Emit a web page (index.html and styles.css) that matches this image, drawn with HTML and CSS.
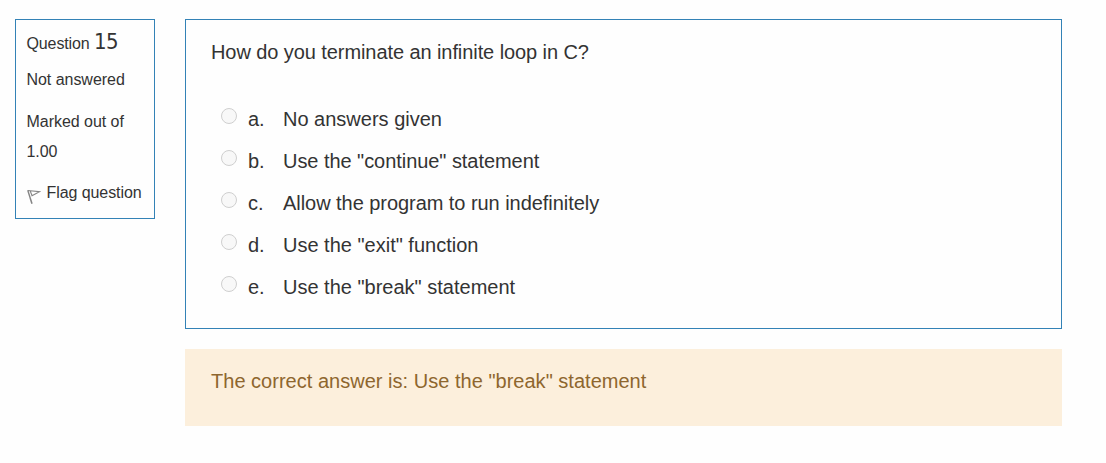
FILE: index.html
```
<!DOCTYPE html>
<html lang="en">
<head>
<meta charset="utf-8">
<title>Question 15</title>
<link rel="stylesheet" href="styles.css">
</head>
<body>
<main class="question">
  <aside class="info">
    <h3 class="number">Question <span class="qno">15</span></h3>
    <div class="state">Not answered</div>
    <div class="grade">Marked out of 1.00</div>
    <div class="flag">
      <svg class="flag-icon" width="14" height="16" viewBox="0 0 14 16" fill="none" stroke="#858585"><path stroke-width="1.5" d="M.8 1.4 5 14.8"/><path stroke-width="1.1" d="M.8 1.5 12.5 2.7 4.5 7.1M3.2 2 4.9 6.2"/></svg>
      <span class="flag-text">Flag question</span>
    </div>
  </aside>
  <div class="content">
    <section class="formulation">
      <p class="qtext">How do you terminate an infinite loop in C?</p>
      <div class="answers">
        <label class="answer"><span class="radio"></span><span class="letter">a.</span><span class="choice">No answers given</span></label>
        <label class="answer"><span class="radio"></span><span class="letter">b.</span><span class="choice tight">Use the "continue" statement</span></label>
        <label class="answer"><span class="radio"></span><span class="letter">c.</span><span class="choice tight">Allow the program to run indefinitely</span></label>
        <label class="answer"><span class="radio"></span><span class="letter">d.</span><span class="choice">Use the "exit" function</span></label>
        <label class="answer"><span class="radio"></span><span class="letter">e.</span><span class="choice">Use the "break" statement</span></label>
      </div>
    </section>
    <section class="outcome">The correct answer is: Use the "break" statement</section>
  </div>
</main>
</body>
</html>
```
FILE: styles.css
```
* { box-sizing: border-box; }
body {
  margin: 0;
  background: #fefefe;
  color: #333;
  font-family: "Liberation Sans", Arial, sans-serif;
  font-size: 20px;
}
.question {
  display: flex;
  align-items: flex-start;
  gap: 30px;
  padding: 19px 44px 0 15px;
}
.info {
  width: 140px;
  height: 200px;
  padding: 8px 0 0 10.5px;
  border: 1px solid #3382b6;
  font-size: 16px;
  letter-spacing: -0.04px;
  line-height: 30px;
  white-space: nowrap;
}
.number {
  margin: 0;
  height: 37px;
  font-size: 16px;
  font-weight: normal;
  line-height: 32px;
  letter-spacing: -0.12px;
}
.qno {
  font-family: "DejaVu Sans Condensed", "DejaVu Sans", sans-serif;
  font-stretch: condensed;
  font-size: 22px;
  letter-spacing: -0.4px;
  line-height: 20px;
}
.state { margin-bottom: 12px; }
.grade { width: 110px; margin-bottom: 11px; white-space: normal; }
.flag { display: flex; gap: 6px; letter-spacing: -0.08px; }
.flag-icon { margin-top: 11px; }
.content { flex: 1; }
.formulation {
  height: 310px;
  padding: 17px 25px;
  border: 1px solid #3382b6;
}
.qtext {
  margin: 0 0 37px;
  line-height: 30px;
  letter-spacing: -0.08px;
}
.answers { padding-left: 10px; }
.answer {
  display: flex;
  height: 42px;
  line-height: 30px;
}
.radio {
  width: 16px;
  height: 16px;
  margin: 4px 11px 0 0;
  border: 1px solid #cfcfcf;
  border-radius: 50%;
  background: #f8f8f8;
}
.letter { width: 35px; }
.tight { letter-spacing: -0.05px; }
.outcome {
  height: 77px;
  margin-top: 20px;
  padding: 17px 26px;
  background: #fcefdc;
  color: #8e662e;
  line-height: 30px;
  letter-spacing: 0.02px;
}
```
